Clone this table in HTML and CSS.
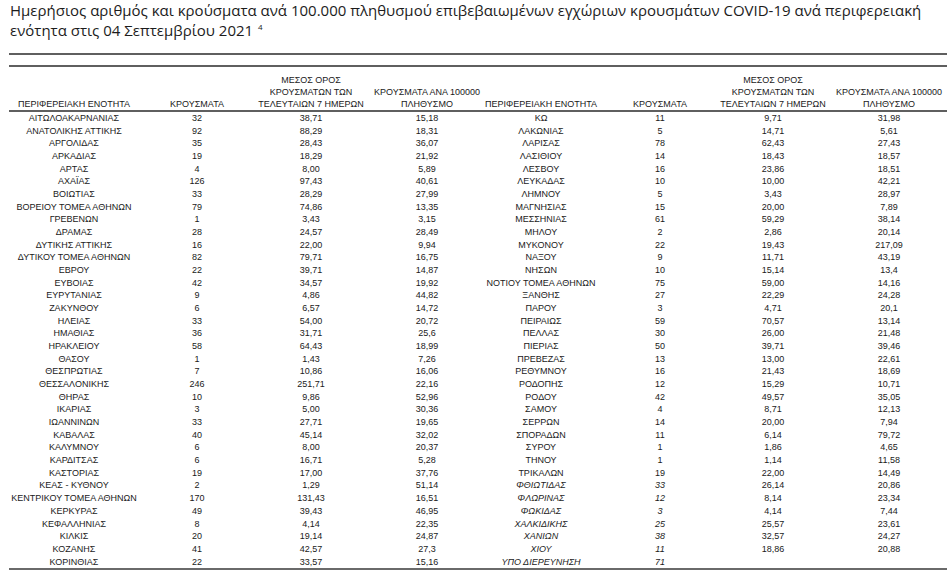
FILE: index.html
```html
<!DOCTYPE html>
<html lang="el">
<head>
<meta charset="utf-8">
<title>Κρούσματα ανά περιφερειακή ενότητα</title>
<link rel="stylesheet" href="styles.css">
</head>
<body>
<div class="page">
  <h1 class="title">Ημερήσιος αριθμός και κρούσματα ανά 100.000 πληθυσμού επιβεβαιωμένων εγχώριων κρουσμάτων COVID-19 ανά περιφερειακή<br>ενότητα στις 04 Σεπτεμβρίου 2021 <sup>4</sup></h1>
  <div class="rule"></div>
  <div class="table">
    <div class="row head">
      <span>ΠΕΡΙΦΕΡΕΙΑΚΗ ΕΝΟΤΗΤΑ</span>
      <span>ΚΡΟΥΣΜΑΤΑ</span>
      <span>ΜΕΣΟΣ ΟΡΟΣ<br>ΚΡΟΥΣΜΑΤΩΝ ΤΩΝ<br>ΤΕΛΕΥΤΑΙΩΝ 7 ΗΜΕΡΩΝ</span>
      <span>ΚΡΟΥΣΜΑΤΑ ΑΝΑ 100000<br>ΠΛΗΘΥΣΜΟ</span>
      <span>ΠΕΡΙΦΕΡΕΙΑΚΗ ΕΝΟΤΗΤΑ</span>
      <span>ΚΡΟΥΣΜΑΤΑ</span>
      <span>ΜΕΣΟΣ ΟΡΟΣ<br>ΚΡΟΥΣΜΑΤΩΝ ΤΩΝ<br>ΤΕΛΕΥΤΑΙΩΝ 7 ΗΜΕΡΩΝ</span>
      <span>ΚΡΟΥΣΜΑΤΑ ΑΝΑ 100000<br>ΠΛΗΘΥΣΜΟ</span>
    </div>
    <div class="body">
      <div class="row"><span>ΑΙΤΩΛΟΑΚΑΡΝΑΝΙΑΣ</span><span>32</span><span>38,71</span><span>15,18</span><span>ΚΩ</span><span>11</span><span>9,71</span><span>31,98</span></div>
      <div class="row"><span>ΑΝΑΤΟΛΙΚΗΣ ΑΤΤΙΚΗΣ</span><span>92</span><span>88,29</span><span>18,31</span><span>ΛΑΚΩΝΙΑΣ</span><span>5</span><span>14,71</span><span>5,61</span></div>
      <div class="row"><span>ΑΡΓΟΛΙΔΑΣ</span><span>35</span><span>28,43</span><span>36,07</span><span>ΛΑΡΙΣΑΣ</span><span>78</span><span>62,43</span><span>27,43</span></div>
      <div class="row"><span>ΑΡΚΑΔΙΑΣ</span><span>19</span><span>18,29</span><span>21,92</span><span>ΛΑΣΙΘΙΟΥ</span><span>14</span><span>18,43</span><span>18,57</span></div>
      <div class="row"><span>ΑΡΤΑΣ</span><span>4</span><span>8,00</span><span>5,89</span><span>ΛΕΣΒΟΥ</span><span>16</span><span>23,86</span><span>18,51</span></div>
      <div class="row"><span>ΑΧΑΪΑΣ</span><span>126</span><span>97,43</span><span>40,61</span><span>ΛΕΥΚΑΔΑΣ</span><span>10</span><span>10,00</span><span>42,21</span></div>
      <div class="row"><span>ΒΟΙΩΤΙΑΣ</span><span>33</span><span>28,29</span><span>27,99</span><span>ΛΗΜΝΟΥ</span><span>5</span><span>3,43</span><span>28,97</span></div>
      <div class="row"><span>ΒΟΡΕΙΟΥ ΤΟΜΕΑ ΑΘΗΝΩΝ</span><span>79</span><span>74,86</span><span>13,35</span><span>ΜΑΓΝΗΣΙΑΣ</span><span>15</span><span>20,00</span><span>7,89</span></div>
      <div class="row"><span>ΓΡΕΒΕΝΩΝ</span><span>1</span><span>3,43</span><span>3,15</span><span>ΜΕΣΣΗΝΙΑΣ</span><span>61</span><span>59,29</span><span>38,14</span></div>
      <div class="row"><span>ΔΡΑΜΑΣ</span><span>28</span><span>24,57</span><span>28,49</span><span>ΜΗΛΟΥ</span><span>2</span><span>2,86</span><span>20,14</span></div>
      <div class="row"><span>ΔΥΤΙΚΗΣ ΑΤΤΙΚΗΣ</span><span>16</span><span>22,00</span><span>9,94</span><span>ΜΥΚΟΝΟΥ</span><span>22</span><span>19,43</span><span>217,09</span></div>
      <div class="row"><span>ΔΥΤΙΚΟΥ ΤΟΜΕΑ ΑΘΗΝΩΝ</span><span>82</span><span>79,71</span><span>16,75</span><span>ΝΑΞΟΥ</span><span>9</span><span>11,71</span><span>43,19</span></div>
      <div class="row"><span>ΕΒΡΟΥ</span><span>22</span><span>39,71</span><span>14,87</span><span>ΝΗΣΩΝ</span><span>10</span><span>15,14</span><span>13,4</span></div>
      <div class="row"><span>ΕΥΒΟΙΑΣ</span><span>42</span><span>34,57</span><span>19,92</span><span>ΝΟΤΙΟΥ ΤΟΜΕΑ ΑΘΗΝΩΝ</span><span>75</span><span>59,00</span><span>14,16</span></div>
      <div class="row"><span>ΕΥΡΥΤΑΝΙΑΣ</span><span>9</span><span>4,86</span><span>44,82</span><span>ΞΑΝΘΗΣ</span><span>27</span><span>22,29</span><span>24,28</span></div>
      <div class="row"><span>ΖΑΚΥΝΘΟΥ</span><span>6</span><span>6,57</span><span>14,72</span><span>ΠΑΡΟΥ</span><span>3</span><span>4,71</span><span>20,1</span></div>
      <div class="row"><span>ΗΛΕΙΑΣ</span><span>33</span><span>54,00</span><span>20,72</span><span>ΠΕΙΡΑΙΩΣ</span><span>59</span><span>70,57</span><span>13,14</span></div>
      <div class="row"><span>ΗΜΑΘΙΑΣ</span><span>36</span><span>31,71</span><span>25,6</span><span>ΠΕΛΛΑΣ</span><span>30</span><span>26,00</span><span>21,48</span></div>
      <div class="row"><span>ΗΡΑΚΛΕΙΟΥ</span><span>58</span><span>64,43</span><span>18,99</span><span>ΠΙΕΡΙΑΣ</span><span>50</span><span>39,71</span><span>39,46</span></div>
      <div class="row"><span>ΘΑΣΟΥ</span><span>1</span><span>1,43</span><span>7,26</span><span>ΠΡΕΒΕΖΑΣ</span><span>13</span><span>13,00</span><span>22,61</span></div>
      <div class="row"><span>ΘΕΣΠΡΩΤΙΑΣ</span><span>7</span><span>10,86</span><span>16,06</span><span>ΡΕΘΥΜΝΟΥ</span><span>16</span><span>21,43</span><span>18,69</span></div>
      <div class="row"><span>ΘΕΣΣΑΛΟΝΙΚΗΣ</span><span>246</span><span>251,71</span><span>22,16</span><span>ΡΟΔΟΠΗΣ</span><span>12</span><span>15,29</span><span>10,71</span></div>
      <div class="row"><span>ΘΗΡΑΣ</span><span>10</span><span>9,86</span><span>52,96</span><span>ΡΟΔΟΥ</span><span>42</span><span>49,57</span><span>35,05</span></div>
      <div class="row"><span>ΙΚΑΡΙΑΣ</span><span>3</span><span>5,00</span><span>30,36</span><span>ΣΑΜΟΥ</span><span>4</span><span>8,71</span><span>12,13</span></div>
      <div class="row"><span>ΙΩΑΝΝΙΝΩΝ</span><span>33</span><span>27,71</span><span>19,65</span><span>ΣΕΡΡΩΝ</span><span>14</span><span>20,00</span><span>7,94</span></div>
      <div class="row"><span>ΚΑΒΑΛΑΣ</span><span>40</span><span>45,14</span><span>32,02</span><span>ΣΠΟΡΑΔΩΝ</span><span>11</span><span>6,14</span><span>79,72</span></div>
      <div class="row"><span>ΚΑΛΥΜΝΟΥ</span><span>6</span><span>8,00</span><span>20,37</span><span>ΣΥΡΟΥ</span><span>1</span><span>1,86</span><span>4,65</span></div>
      <div class="row"><span>ΚΑΡΔΙΤΣΑΣ</span><span>6</span><span>16,71</span><span>5,28</span><span>ΤΗΝΟΥ</span><span>1</span><span>1,14</span><span>11,58</span></div>
      <div class="row"><span>ΚΑΣΤΟΡΙΑΣ</span><span>19</span><span>17,00</span><span>37,76</span><span>ΤΡΙΚΑΛΩΝ</span><span>19</span><span>22,00</span><span>14,49</span></div>
      <div class="row"><span>ΚΕΑΣ - ΚΥΘΝΟΥ</span><span>2</span><span>1,29</span><span>51,14</span><span class="it">ΦΘΙΩΤΙΔΑΣ</span><span class="it">33</span><span>26,14</span><span>20,86</span></div>
      <div class="row"><span>ΚΕΝΤΡΙΚΟΥ ΤΟΜΕΑ ΑΘΗΝΩΝ</span><span>170</span><span>131,43</span><span>16,51</span><span class="it">ΦΛΩΡΙΝΑΣ</span><span class="it">12</span><span>8,14</span><span>23,34</span></div>
      <div class="row"><span>ΚΕΡΚΥΡΑΣ</span><span>49</span><span>39,43</span><span>46,95</span><span class="it">ΦΩΚΙΔΑΣ</span><span class="it">3</span><span>4,14</span><span>7,44</span></div>
      <div class="row"><span>ΚΕΦΑΛΛΗΝΙΑΣ</span><span>8</span><span>4,14</span><span>22,35</span><span class="it">ΧΑΛΚΙΔΙΚΗΣ</span><span class="it">25</span><span>25,57</span><span>23,61</span></div>
      <div class="row"><span>ΚΙΛΚΙΣ</span><span>20</span><span>19,14</span><span>24,87</span><span class="it">ΧΑΝΙΩΝ</span><span class="it">38</span><span>32,57</span><span>24,27</span></div>
      <div class="row"><span>ΚΟΖΑΝΗΣ</span><span>41</span><span>42,57</span><span>27,3</span><span class="it">ΧΙΟΥ</span><span class="it">11</span><span>18,86</span><span>20,88</span></div>
      <div class="row"><span>ΚΟΡΙΝΘΙΑΣ</span><span>22</span><span>33,57</span><span>15,16</span><span class="it">ΥΠΟ ΔΙΕΡΕΥΝΗΣΗ</span><span class="it">71</span><span></span><span></span></div>
    </div>
  </div>
</div>
</body>
</html>
```

FILE: styles.css
```css
html, body {
  margin: 0;
  padding: 0;
  background: #ffffff;
}

.page {
  width: 938px;
  margin-left: 9px;
  color: #222222;
}

.title {
  margin: 0 0 0 1px;
  font-family: "Open Sans", "Noto Sans", sans-serif;
  font-weight: 400;
  font-size: 15px;
  line-height: 20px;
  color: #1c1c1c;
  white-space: nowrap;
}

.title sup {
  font-size: 8px;
  line-height: 0;
  vertical-align: 6px;
  margin-left: 1px;
}

.rule {
  margin-top: 13px;
  border-top: 2px solid #5f5f5f;
}

.table {
  margin-top: 10px;
  border-top: 2px solid #5f5f5f;
  border-bottom: 2px solid #6a6a6a;
  font-family: "Liberation Sans", Arial, sans-serif;
  font-size: 9px;
  color: #1a1a1a;
}

.row {
  display: grid;
  grid-template-columns: 130px 20px 76px 24px 104px 4px 120px 0 108px 27px 76px 23px 104px 6px 116px;
  justify-items: center;
  white-space: nowrap;
}

.row > :nth-child(1) { grid-column: 1; }
.row > :nth-child(2) { grid-column: 3; }
.row > :nth-child(3) { grid-column: 5; }
.row > :nth-child(4) { grid-column: 7; }
.row > :nth-child(5) { grid-column: 9; }
.row > :nth-child(6) { grid-column: 11; }
.row > :nth-child(7) { grid-column: 13; }
.row > :nth-child(8) { grid-column: 15; }

.head {
  height: 43px;
  align-items: end;
  text-align: center;
  line-height: 12px;
  border-bottom: 2px solid #5f5f5f;
}

.body .row {
  height: 12.68px;
  line-height: 12.68px;
}

.it {
  font-style: italic;
}
```
